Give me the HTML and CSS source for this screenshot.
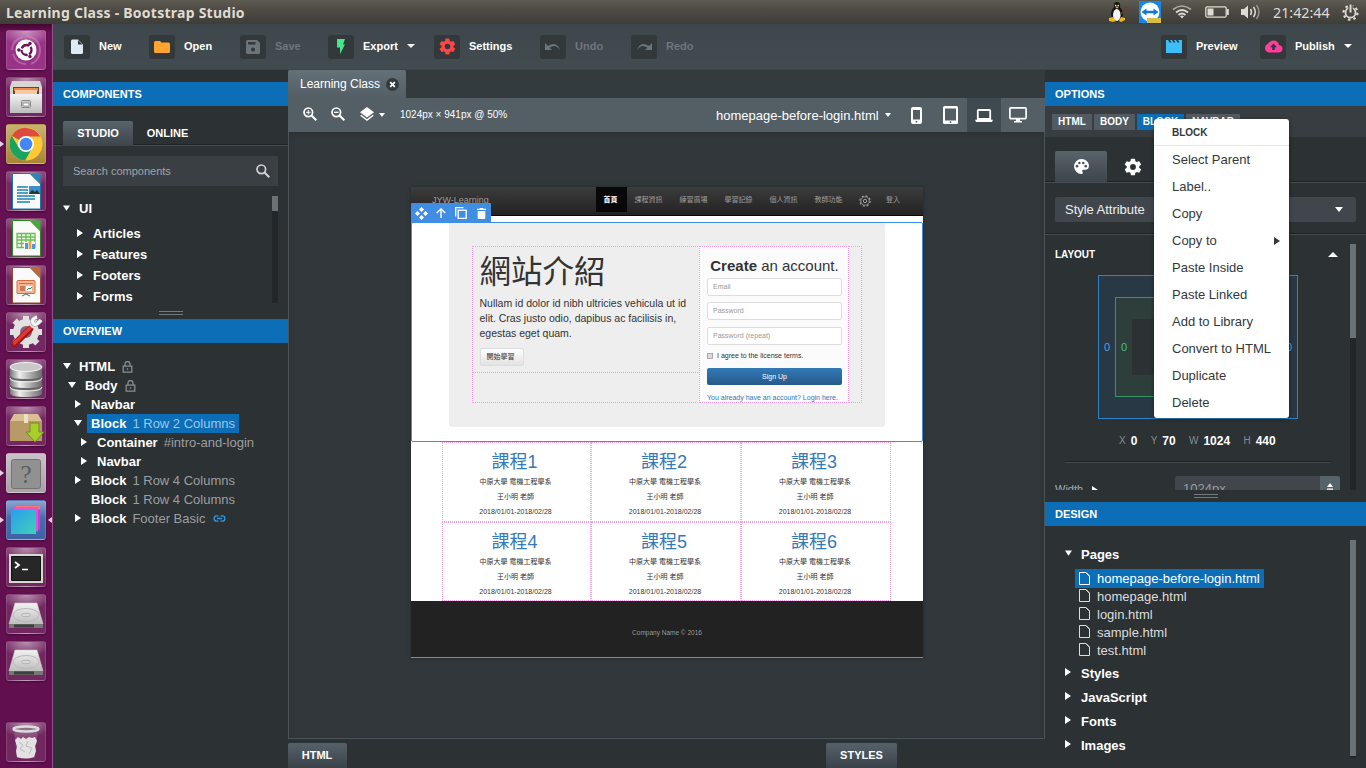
FILE: index.html
```html
<!DOCTYPE html>
<html lang="en">
<head>
<meta charset="utf-8">
<title>Learning Class - Bootstrap Studio</title>
<link rel="stylesheet" href="styles.css">
</head>
<body>
<svg class="sprite" width="0" height="0">
  <defs>
    <linearGradient id="metal" x1="0" y1="0" x2="0" y2="1"><stop offset="0" stop-color="#f2f2f2"/><stop offset="1" stop-color="#bdbdbd"/></linearGradient>
    <linearGradient id="cyl" x1="0" y1="0" x2="1" y2="0"><stop offset="0" stop-color="#777"/><stop offset=".3" stop-color="#eee"/><stop offset=".65" stop-color="#aaa"/><stop offset="1" stop-color="#6b6b6b"/></linearGradient>
    <linearGradient id="studio" x1="0" y1="0" x2="1" y2="1"><stop offset="0" stop-color="#299df0"/><stop offset="1" stop-color="#42d1b5"/></linearGradient>
  </defs>
  <symbol id="right" viewBox="0 0 6 8"><path d="M0 0l6 4-6 4z" fill="currentColor"/></symbol>
  <symbol id="down" viewBox="0 0 8 6"><path d="M0 0h8L4 6z" fill="currentColor"/></symbol>
  <symbol id="caret" viewBox="0 0 8 4"><path d="M0 0h8L4 4z" fill="currentColor"/></symbol>
  <symbol id="gear" viewBox="0 0 24 24"><path fill="currentColor" d="M19.4 13a7.800 7.800 0 0 0 0-2l2.100-1.600a.5.5 0 0 0 .1-.7l-2-3.400a.5.5 0 0 0-.6-.2l-2.500 1a7.300 7.300 0 0 0-1.700-1l-.4-2.600a.5.500 0 0 0-.5-.5h-4a.5.500 0 0 0-.5.500L9 5.100a7.300 7.300 0 0 0-1.700 1l-2.500-1a.5.500 0 0 0-.6.200l-2 3.400a.5.500 0 0 0 .1.700L4.500 11a7.800 7.800 0 0 0 0 2l-2.200 1.600a.5.500 0 0 0-.1.700l2 3.400c.1.200.4.300.6.200l2.500-1a7.300 7.300 0 0 0 1.700 1l.4 2.600c0 .3.200.5.500.5h4c.300 0 .5-.2.500-.5l.4-2.600a7.300 7.300 0 0 0 1.700-1l2.500 1c.2.100.5 0 .6-.2l2-3.400a.5.500 0 0 0-.1-.7zM12 15.500a3.500 3.500 0 1 1 0-7 3.500 3.500 0 0 1 0 7z"/></symbol>
  <symbol id="lock" viewBox="0 0 11 12"><path d="M3 5V3a2.500 2.500 0 0 1 5 0v2M1.200 5.200h8.600v6H1.200zM4.800 8h1.400" fill="none" stroke="#8b8f91" stroke-width="1.300"/></symbol>
  <symbol id="page" viewBox="0 0 11 13"><path d="M1 .5h6.200L10.500 4v8.500H.5V.5z" fill="none" stroke="currentColor"/><path d="M7 .7L10.200 4" stroke="currentColor" fill="none"/></symbol>
  <symbol id="mag" viewBox="0 0 14 14"><circle cx="5.300" cy="5.300" r="4.300" fill="none" stroke="currentColor" stroke-width="1.700"/><path d="M8.300 8.300l5 5" stroke="currentColor" stroke-width="2"/></symbol>
  <symbol id="drive" viewBox="0 0 40 40"><path d="M9 9h22l6 21H3z" fill="url(#metal)" stroke="#c9c9c9" stroke-width=".6"/><ellipse cx="20" cy="21" rx="13" ry="6.500" fill="none" stroke="#b9b9b9"/><ellipse cx="20" cy="21" rx="4.500" ry="1.800" fill="#d8d8d8" stroke="#aaa" stroke-width=".8"/><path d="M3 30h34v4H3z" fill="#777"/><path d="M8 30.500h20v3H8z" fill="#3f3f3f"/></symbol>
</svg>

<header class="osbar">
  <span class="os-title">Learning Class - Bootstrap Studio</span>
  <div class="tray">
    <svg class="t-tux" width="22" height="22" viewBox="0 0 22 22"><ellipse cx="10" cy="13" rx="6" ry="7.500" fill="#151515"/><ellipse cx="10" cy="5" rx="3.200" ry="4" fill="#151515"/><ellipse cx="9.800" cy="14" rx="3.800" ry="6" fill="#f4f4f4"/><path d="M8 5.500l4 .2-2 2z" fill="#f3b41c"/><circle cx="8.600" cy="4.500" r=".8" fill="#fff"/><circle cx="11.200" cy="4.500" r=".8" fill="#fff"/><path d="M2 17l4-1 3 4-3 1-4-1zM18 17l-4-1-2 4 2 1 4-2z" fill="#f3b41c"/><path d="M14 13l6-7" stroke="#6c3d19" stroke-width="1.500"/></svg>
    <svg class="t-tv" width="22" height="22" viewBox="0 0 22 22"><path fill="#1486e8" d="M0 0h22v22H0z"/><circle cx="11" cy="11" r="9.500" fill="#fff"/><path d="M2.500 11l5-3.500v2.300h7V7.500l5 3.500-5 3.500v-2.300h-7v2.300z" fill="#1479d5"/><path d="M8 17h14v5H8z" fill="#d8bd48"/></svg>
    <svg class="t-wifi" width="20" height="14" viewBox="0 0 20 14"><g fill="none" stroke="#dfdbd2" stroke-width="1.700"><path d="M1 4.500q9-7 18 0" opacity=".65"/><path d="M4 7.500q6-5 12 0"/><path d="M6.500 10q3.500-3 7 0"/></g><path d="M8 11.300q2-1.500 4 0L10 13.500z" fill="#dfdbd2"/></svg>
    <svg class="t-bat" width="24" height="12" viewBox="0 0 24 12"><rect x=".8" y=".8" width="20.400" height="10.400" rx="1.500" fill="none" stroke="#dfdbd2" stroke-width="1.300"/><path d="M2.500 2.500h6v7h-6zM22 3h1.800v6H22z" fill="#dfdbd2"/></svg>
    <svg class="t-vol" width="20" height="16" viewBox="0 0 20 16"><path d="M0 5h3l4-3.500v13L3 11H0z" fill="#dfdbd2"/><g fill="none" stroke="#dfdbd2" stroke-width="1.500"><path d="M9.500 5q2 3 0 6"/><path d="M12.500 3q3.500 5 0 10"/><path d="M15.500 1q5 7 0 14" opacity=".5"/></g></svg>
    <span class="clock">21:42:44</span>
    <svg class="t-pow" width="17" height="17" viewBox="0 0 17 17"><circle cx="8.500" cy="8.700" r="5" fill="none" stroke="#dfdbd2" stroke-width="1.800"/><circle cx="8.500" cy="8.700" r="7" fill="none" stroke="#dfdbd2" stroke-width="2.200" stroke-dasharray="2.500 3"/><path d="M8.500 0v8" stroke="#4b4a44" stroke-width="4.500"/><path d="M8.500 .5v8" stroke="#dfdbd2" stroke-width="2"/></svg>
  </div>
</header>

<div class="desktop">
<nav class="launcher">
  <div class="tile tile-dash"><svg viewBox="0 0 40 40"><g fill="none" stroke="#d997ca" opacity=".45" stroke-width="2"><path d="M20 6A14 14 0 0 1 34 20Q34 30 25 34M6 20Q6 10 17 7M20 34Q10 34 7 24"/></g><circle cx="20" cy="20" r="10.500" fill="#fff"/><circle cx="20.500" cy="20" r="5" fill="none" stroke="#6b1157" stroke-width="2.300" stroke-dasharray="9 1.470" stroke-dashoffset="4"/><g fill="#6b1157"><circle cx="12.800" cy="20" r="1.700"/><circle cx="24" cy="13.500" r="1.700"/><circle cx="24" cy="26.500" r="1.700"/></g></svg></div>
  <div class="tile"><svg viewBox="0 0 40 40"><path d="M6 4h28l2 6v26H4V10z" fill="#d6d6d4"/><path d="M7 10h26v7H7z" fill="#5f463a"/><path d="M8 11h24v3H8z" fill="#f08a4a"/><path d="M9 13h22v4H9z" fill="#f7c9a2"/><path d="M4 17h32v19H4z" fill="url(#metal)"/><rect x="15.500" y="23.500" width="9" height="7" rx="1" fill="#ccc" stroke="#888"/><path d="M17 26h6v3h-6z" fill="#fff" stroke="#777" stroke-width=".7"/></svg></div>
  <div class="tile tile-chrome run"><svg viewBox="0 0 40 40"><circle cx="20" cy="20" r="16.500" fill="#fcc934"/><path d="M20 20L5.700 11.800A16.500 16.500 0 0 1 34.300 12.500H20z" fill="#dd4b3e"/><path d="M5.700 11.800A16.500 16.500 0 0 0 19 36.500L26.500 23.500 13 24z" fill="#1aa260"/><circle cx="20" cy="20" r="8" fill="#fff"/><circle cx="20" cy="20" r="6.300" fill="#4486f4"/></svg></div>
  <div class="tile"><svg viewBox="0 0 40 40"><path d="M6.500 2.500H24L34.500 13v25h-28z" fill="#fafafa" stroke="#1d73a3"/><path d="M24 2.500h10.500V13z" fill="#2b86b6"/><path d="M11 16h11M11 19h11M11 22h11M11 25h18M11 28h18M11 31h13" stroke="#1f81b3" stroke-width="1.500"/><path d="M23 15h11v8H23z" fill="#3b8ed0"/><path d="M23 23l3-4 3 2 2-2 3 4z" fill="#1c3b35"/></svg></div>
  <div class="tile"><svg viewBox="0 0 40 40"><path d="M6.500 2.500H24L34.500 13v25h-28z" fill="#fafafa" stroke="#278a1e"/><path d="M24 2.500h10.500V13z" fill="#3fae35"/><path d="M11 15.500h18v14H11zM11 19h18M11 22h18M11 25.500h18M15.500 15v14M20 15v14M24.500 15v14" fill="none" stroke="#67c04c" stroke-width="1.300"/><path d="M18 24h11v7H18z" fill="#fff"/><path d="M19 25h3v6h-3z" fill="#4c99d6"/><path d="M22.500 23h3v8h-3z" fill="#e8a54b"/><path d="M26 26h3v5h-3z" fill="#4c99d6"/></svg></div>
  <div class="tile"><svg viewBox="0 0 40 40"><path d="M6.500 2.500H24L34.500 13v25h-28z" fill="#fafafa" stroke="#96492c"/><path d="M24 2.500h10.500V13z" fill="#b56b3f"/><rect x="11" y="15.500" width="18" height="13" rx="1" fill="#f4b592" stroke="#d96c3f"/><path d="M13 18.500h14" stroke="#d96c3f"/><path d="M14 21h5v5h-5z" fill="#c97b54"/><path d="M20 21h6v5h-6z" fill="#fff"/><path d="M21 25l2-2 1 1 2-2" stroke="#2a9a50" fill="none"/><path d="M16 31l4-2 4 2" stroke="#666" fill="none"/></svg></div>
  <div class="tile"><svg viewBox="0 0 40 40"><g fill="#e1e1e1"><circle cx="20" cy="20" r="13"/><path d="M17 4h6v32h-6zM4 17h32v6H4z"/><path d="M17 4h6v32h-6z" transform="rotate(45 20 20)"/><path d="M17 4h6v32h-6z" transform="rotate(-45 20 20)"/></g><circle cx="20" cy="20" r="6" fill="#8b5b80"/><path d="M8.500 32L24 17" stroke="#a31515" stroke-width="6.500" stroke-linecap="round"/><path d="M8.500 31L24 16" stroke="#dc3a34" stroke-width="3.500" stroke-linecap="round"/><path d="M25 15l4-4" stroke="#ddd" stroke-width="4"/><path d="M31 5q-6 2-4 6t8-3" fill="none" stroke="#999" stroke-width="4.500"/><path d="M31 5q-6 2-4 6t8-3" fill="none" stroke="#f4f4f4" stroke-width="3.400"/></svg></div>
  <div class="tile"><svg viewBox="0 0 40 40"><path d="M4 8v26q0 4 16 4t16-4V8z" fill="url(#cyl)"/><ellipse cx="20" cy="8" rx="16" ry="4.500" fill="#c8c8c8" stroke="#f4f4f4"/><path d="M4 17q0 4 16 4t16-4M4 26q0 4 16 4t16-4" fill="none" stroke="#666" stroke-width="2"/><path d="M4 19q0 4 16 4t16-4M4 28q0 4 16 4t16-4" fill="none" stroke="#eee"/></svg></div>
  <div class="tile"><svg viewBox="0 0 40 40"><path d="M8 8h24l4 7v20H4V15z" fill="#d9bf91"/><path d="M4 15h32v20H4z" fill="#b79a68"/><path d="M18 8h4v9h-4z" fill="#eee0c4"/><path d="M24 17h9v9h5l-9 10-9-10h4z" fill="#a8ce2b" stroke="#718f18"/></svg></div>
  <div class="tile tile-gray run"><svg viewBox="0 0 40 40"><rect x="5.500" y="6.500" width="29" height="29" rx="2" fill="#919191" stroke="#737373"/><text class="qmark" x="20" y="30" text-anchor="middle">?</text></svg></div>
  <div class="tile tile-bs run active"><svg viewBox="0 0 40 40"><path d="M10 5.500h24v24H10z" fill="#e82cc4"/><path d="M10 5.500h24v4H10z" fill="#f57676"/><path d="M8 7.500h24v24H8z" fill="#b862ef"/><path d="M8 7.500h24v3H8z" fill="#ec51cb"/><path d="M5 10h25v24H5z" fill="url(#studio)"/></svg></div>
  <div class="tile"><svg viewBox="0 0 40 40"><path d="M3 7h34v29H3z" fill="#d8d8d5"/><path d="M5.500 9.500h29v24h-29z" fill="#272727" stroke="#111"/><path d="M9 15l4 3-4 3M16 22.500h6" fill="none" stroke="#fff" stroke-width="1.700"/></svg></div>
  <div class="tile"><svg><use href="#drive"/></svg></div>
  <div class="tile"><svg><use href="#drive"/></svg></div>
  <div class="tile tile-trash"><svg viewBox="0 0 40 40"><path d="M8 7l3 29h18l3-29z" fill="#9a6b90" opacity=".5"/><path d="M9 18l3-3 3 2 2-2 3 2 3-2 3 1 3-1 2 4-2 5 1 5-2 6q-8 3-17 0l-1-6 1-4z" fill="#e2e2e2"/><path d="M13 20l4 3-3 4 5 3M22 19l-2 5 6 2-3 6" fill="none" stroke="#bbb"/><ellipse cx="20" cy="7" rx="12.500" ry="2.500" fill="#8e7288" stroke="#dcdcdc" stroke-width="2.500"/></svg></div>
</nav>

<div class="app">
<div class="toolbar">
  <div class="tools">
    <div class="tool"><i><svg width="14" height="16" viewBox="0 0 14 16"><path d="M1 2q0-1.500 1.500-1.500H8L13 5.500v8q0 1.500-1.500 1.500h-9Q1 15 1 13.500z" fill="#deebf4"/><path d="M8 1v4.500h4.500z" fill="#33383b"/></svg></i><span>New</span></div>
    <div class="tool"><i><svg width="16" height="12" viewBox="0 0 16 12"><path d="M1.500 0H6l1.500 1.500h7Q16 1.500 16 3v7.500q0 1.500-1.500 1.500h-13Q0 12 0 10.500v-9Q0 0 1.500 0z" fill="#ffa42e"/></svg></i><span>Open</span></div>
    <div class="tool off"><i><svg width="14" height="14" viewBox="0 0 14 14"><path d="M1.500 0H11l3 3v9.500q0 1.500-1.500 1.500h-11Q0 14 0 12.500v-11Q0 0 1.500 0z" fill="#6d747a"/><path d="M2 2h7.500v2.500H2z" fill="#33383b"/><circle cx="7" cy="9.500" r="2" fill="#33383b"/></svg></i><span>Save</span></div>
    <div class="tool"><i><svg width="8" height="15" viewBox="0 0 8 15"><path d="M0 0h8L6 5.500h2L3 15V8.500H0z" fill="#49e58b"/></svg></i><span>Export</span><svg class="tcaret"><use href="#caret"/></svg></div>
    <div class="tool"><i class="red"><svg width="19" height="19"><use href="#gear"/></svg></i><span>Settings</span></div>
    <div class="tool off"><i><svg width="16" height="8" viewBox="0 0 16 8"><path d="M0 0v7h7L4.500 4.700Q11 0 15 7.500 12-2.500 3 3z" fill="#6d747a"/></svg></i><span>Undo</span></div>
    <div class="tool off"><i><svg width="16" height="8" viewBox="0 0 16 8"><path d="M16 0v7H9l2.500-2.300Q5 0 1 7.500 4-2.500 13 3z" fill="#6d747a"/></svg></i><span>Redo</span></div>
  </div>
  <div class="tools2">
    <div class="tool"><i><svg width="16" height="13" viewBox="0 0 16 13"><path d="M0 0h2l1.500 2.500h2L4 0h2l1.500 2.500h2L8 0h2l1.500 2.500h2L12 0h4v13H0z" fill="#3bbefa"/></svg></i><span>Preview</span></div>
    <div class="tool"><i><svg width="19" height="13" viewBox="0 0 19 13"><path d="M5 12.500A4.500 4.500 0 0 1 3.500 4Q6 .5 9.500.5q4.500 0 5.500 4.500 3.500.5 3.500 3.800T15 12.500z" fill="#ff3d9d"/><path d="M9.500 3.500L13 7.200h-2.200V10H8.200V7.200H6z" fill="#33383b"/></svg></i><span>Publish</span><svg class="tcaret"><use href="#caret"/></svg></div>
  </div>
</div>

<div class="workspace">
<aside class="left">
  <h2 class="bar">COMPONENTS</h2>
  <div class="tabs"><span class="tab on">STUDIO</span><span class="tab">ONLINE</span></div>
  <div class="search"><span>Search components</span><svg width="14" height="14"><use href="#mag"/></svg></div>
  <div class="complist">
    <div class="comps">
      <div class="row r-ui"><svg class="dn"><use href="#down"/></svg><b>UI</b></div>
      <div class="row sub"><svg class="rt"><use href="#right"/></svg><b>Articles</b></div>
      <div class="row sub"><svg class="rt"><use href="#right"/></svg><b>Features</b></div>
      <div class="row sub"><svg class="rt"><use href="#right"/></svg><b>Footers</b></div>
      <div class="row sub"><svg class="rt"><use href="#right"/></svg><b>Forms</b></div>
    </div>
    <div class="scroll"><div class="thumb th-comp"></div></div>
  </div>
  <div class="split"></div>
  <h2 class="bar">OVERVIEW</h2>
  <div class="tree">
    <div class="row l0"><svg class="dn"><use href="#down"/></svg><b>HTML</b><svg class="lk"><use href="#lock"/></svg></div>
    <div class="row l1"><svg class="dn"><use href="#down"/></svg><b>Body</b><svg class="lk"><use href="#lock"/></svg></div>
    <div class="row l2"><svg class="rt"><use href="#right"/></svg><b>Navbar</b></div>
    <div class="row l2"><svg class="dn"><use href="#down"/></svg><span class="sel"><b>Block</b><em>1 Row 2 Columns</em></span></div>
    <div class="row l3"><svg class="rt"><use href="#right"/></svg><b>Container</b><em>#intro-and-login</em></div>
    <div class="row l3"><svg class="rt"><use href="#right"/></svg><b>Navbar</b></div>
    <div class="row l2"><svg class="rt"><use href="#right"/></svg><b>Block</b><em>1 Row 4 Columns</em></div>
    <div class="row l2"><svg class="rt"></svg><b>Block</b><em>1 Row 4 Columns</em></div>
    <div class="row l2"><svg class="rt"><use href="#right"/></svg><b>Block</b><em>Footer Basic</em><svg class="lnk" viewBox="0 0 13 7"><path d="M5.500.8H3.800a2.700 2.700 0 0 0 0 5.400h1.700M7.500.8h1.700a2.700 2.700 0 0 1 0 5.400H7.500M4 3.500h5" fill="none" stroke="#2d9be0" stroke-width="1.300"/></svg></div>
  </div>
</aside>

<main class="center">
  <div class="doctabs"><div class="doctab">Learning Class<svg width="13" height="13" viewBox="0 0 13 13"><circle cx="6.500" cy="6.500" r="6.500" fill="#343b3e"/><path d="M4.200 4.200l4.600 4.600M8.800 4.200L4.200 8.800" stroke="#fff" stroke-width="1.900"/></svg></div></div>
  <div class="viewbar">
    <svg class="v-in" width="14" height="14" viewBox="0 0 14 14"><use href="#mag" width="14" height="14"/><path d="M3 5.300h4.600M5.300 3v4.600" stroke="#fff"/></svg>
    <svg class="v-out" width="14" height="14" viewBox="0 0 14 14"><use href="#mag" width="14" height="14"/><path d="M3 5.300h4.600" stroke="#fff" stroke-width="1.300"/></svg>
    <svg class="v-lay" width="14" height="14" viewBox="0 0 14 14"><path d="M7 0l7 5.200-7 5.300-7-5.300z" fill="#fff"/><path d="M.7 8.200L7 13l6.300-4.800" fill="none" stroke="#fff" stroke-width="1.400"/></svg>
    <svg class="v-caret" width="6" height="4" viewBox="0 0 6 4"><path d="M0 0h6L3 4z" fill="#fff"/></svg>
    <span class="dims">1024px × 941px @ 50%</span>
    <span class="fname">homepage-before-login.html<svg width="6" height="4" viewBox="0 0 6 4"><path d="M0 0h6L3 4z" fill="#fff"/></svg></span>
    <div class="devs">
      <span><svg width="11" height="17" viewBox="0 0 11 17"><rect width="11" height="17" rx="2" fill="#fff"/><path d="M2 3h7v9.500H2z" fill="#535e65"/><circle cx="5.500" cy="14.700" r=".9" fill="#535e65"/></svg></span>
      <span><svg width="15" height="18" viewBox="0 0 15 18"><rect width="15" height="18" rx="1.500" fill="#fff"/><path d="M2 2.500h11v12H2z" fill="#535e65"/><circle cx="7.500" cy="16.200" r=".9" fill="#535e65"/></svg></span>
      <span class="on"><svg width="18" height="13" viewBox="0 0 18 13"><path d="M2.800 10V1.800q0-.8.800-.8h10.800q.8 0 .8.800V10z" fill="none" stroke="#fff" stroke-width="1.800"/><path d="M0 10.800h18l-1 2.200H1z" fill="#fff"/></svg></span>
      <span><svg width="18" height="16" viewBox="0 0 18 16"><rect x=".9" y=".9" width="16.200" height="10.700" rx="1" fill="none" stroke="#fff" stroke-width="1.700"/><path d="M7 12h4v2h2v1.500H5V14h2z" fill="#fff"/></svg></span>
    </div>
  </div>
  <div class="canvas">
    <div class="board">
      <div class="nav">
        <span class="brand">JYW-Learning</span>
        <div class="links"><span class="cur">首頁</span><span>課程資訊</span><span>練習廣場</span><span>學習記錄</span><span>個人資訊</span><span>教師功能</span><svg width="12" height="12" viewBox="0 0 12 12"><g fill="none" stroke="#9d9d9d"><circle cx="6" cy="6" r="1.700"/><circle cx="6" cy="6" r="4.200" stroke-width=".8"/><circle cx="6" cy="6" r="5.100" stroke-width="1.300" stroke-dasharray="2 2"/></g></svg><span>登入</span></div>
      </div>
      <section class="picked">
        <div class="handle">
          <svg width="13" height="13" viewBox="0 0 13 13"><path d="M6.500 0L9 2.500 6.500 5 4 2.500zM6.500 8L9 10.500 6.500 13 4 10.500zM2.500 4L5 6.500 2.500 9 0 6.500zM10.500 4L13 6.500 10.500 9 8 6.500z" fill="#fff"/></svg>
          <svg width="10" height="10" viewBox="0 0 10 10"><path d="M5 10V1M.7 5L5 .9 9.300 5" fill="none" stroke="#fff" stroke-width="1.400"/></svg>
          <svg width="12" height="12" viewBox="0 0 12 12"><path d="M.7 9.500V.7H8.500" fill="none" stroke="#fff" stroke-width="1.300"/><rect x="3.200" y="3.200" width="8" height="8.200" fill="none" stroke="#fff" stroke-width="1.300"/></svg>
          <svg width="9" height="11" viewBox="0 0 9 11"><path d="M0 .7h2.500L3 0h3l.5.700H9V2H0zM.7 3h7.600v7q0 1-1 1H1.700q-1 0-1-1z" fill="#fff"/></svg>
        </div>
        <div class="jumbo">
          <div class="cols">
            <div class="intro">
              <h1>網站介紹</h1>
              <p>Nullam id dolor id nibh ultricies vehicula ut id<br>elit. Cras justo odio, dapibus ac facilisis in,<br>egestas eget quam.</p>
              <span class="start">開始學習</span>
            </div>
            <div class="signup">
              <h3><b>Create</b> an account.</h3>
              <span class="inp">Email</span><span class="inp">Password</span><span class="inp">Password (repeat)</span>
              <div class="agree"><i></i>I agree to the license terms.</div>
              <span class="go">Sign Up</span>
              <span class="already">You already have an account? Login here.</span>
            </div>
          </div>
        </div>
      </section>
      <div class="courses">
        <div><h4>課程1</h4><p>中原大學 電機工程學系</p><p>王小明 老師</p><p>2018/01/01-2018/02/28</p></div>
        <div><h4>課程2</h4><p>中原大學 電機工程學系</p><p>王小明 老師</p><p>2018/01/01-2018/02/28</p></div>
        <div><h4>課程3</h4><p>中原大學 電機工程學系</p><p>王小明 老師</p><p>2018/01/01-2018/02/28</p></div>
        <div><h4>課程4</h4><p>中原大學 電機工程學系</p><p>王小明 老師</p><p>2018/01/01-2018/02/28</p></div>
        <div><h4>課程5</h4><p>中原大學 電機工程學系</p><p>王小明 老師</p><p>2018/01/01-2018/02/28</p></div>
        <div><h4>課程6</h4><p>中原大學 電機工程學系</p><p>王小明 老師</p><p>2018/01/01-2018/02/28</p></div>
      </div>
      <div class="foot">Company Name © 2016</div>
    </div>
  </div>
  <div class="dock"><span class="d-html">HTML</span><span class="d-styles">STYLES</span></div>
</main>

<aside class="right">
  <h2 class="bar">OPTIONS</h2>
  <div class="crumbs"><span>HTML</span><span>BODY</span><span class="on">BLOCK</span><span>NAVBAR</span></div>
  <div class="otabs"><span class="on"><svg width="17" height="17" viewBox="0 0 24 24"><path fill="#fff" d="M12 1.500a10.500 10.500 0 1 0 0 21c1 0 1.800-.8 1.800-1.800 0-1.300-.8-1.500-.8-2.500s.8-1.700 1.800-1.700h2.200a5.500 5.500 0 0 0 5.500-5.500c0-5.300-4.700-9.500-10.500-9.500z"/><g fill="#4a5158"><circle cx="5.700" cy="11.500" r="1.800"/><circle cx="9" cy="7" r="1.800"/><circle cx="14.500" cy="7" r="1.800"/><circle cx="18" cy="11.500" r="1.800"/></g></svg></span><span><svg width="20" height="20"><use href="#gear"/></svg></span></div>
  <div class="selwrap"><div class="select">Style Attribute<svg width="8" height="5" viewBox="0 0 8 5"><path d="M0 0h8L4 5z" fill="#fff"/></svg></div></div>
  <div class="props">
    <div class="plist">
      <div class="phead">LAYOUT<svg width="10" height="5" viewBox="0 0 10 5"><path d="M0 5h10L5 0z" fill="#fff"/></svg></div>
      <div class="box"><span>0</span><div class="pad"><span>0</span><div class="core"></div><span>0</span></div><span>0</span></div>
      <div class="xy"><span>X</span><b>0</b><span>Y</span><b>70</b><span>W</span><b>1024</b><span>H</span><b>440</b></div>
      <div class="prow"><span class="wl">Width</span><svg class="rt"><use href="#right"/></svg><div class="num">1024px</div><div class="step"><svg width="6" height="7" viewBox="0 0 6 7"><path d="M0 4h6L3 0zM0 5.500h6v1.200H0z" fill="#fff"/></svg></div></div>
    </div>
    <div class="scroll"><div class="thumb th-opt"></div></div>
  </div>
  <div class="split rs"></div>
  <h2 class="bar">DESIGN</h2>
  <div class="design">
    <div class="dlist">
      <div class="row big"><svg class="dn"><use href="#down"/></svg><b>Pages</b></div>
      <div class="files">
        <div class="file on"><svg><use href="#page"/></svg>homepage-before-login.html</div>
        <div class="file"><svg><use href="#page"/></svg>homepage.html</div>
        <div class="file"><svg><use href="#page"/></svg>login.html</div>
        <div class="file"><svg><use href="#page"/></svg>sample.html</div>
        <div class="file"><svg><use href="#page"/></svg>test.html</div>
      </div>
      <div class="row big"><svg class="rt"><use href="#right"/></svg><b>Styles</b></div>
      <div class="row big"><svg class="rt"><use href="#right"/></svg><b>JavaScript</b></div>
      <div class="row big"><svg class="rt"><use href="#right"/></svg><b>Fonts</b></div>
      <div class="row big"><svg class="rt"><use href="#right"/></svg><b>Images</b></div>
    </div>
    <div class="scroll"><div class="thumb th-des"></div></div>
  </div>
</aside>
</div>
</div>
</div>

<div class="menu">
  <div class="mh">BLOCK</div>
  <div class="mi">Select Parent</div><div class="mi">Label..</div><div class="mi">Copy</div>
  <div class="mi">Copy to<svg class="rt"><use href="#right"/></svg></div>
  <div class="mi">Paste Inside</div><div class="mi">Paste Linked</div><div class="mi">Add to Library</div><div class="mi">Convert to HTML</div><div class="mi">Duplicate</div><div class="mi">Delete</div>
</div>
</body>
</html>
```
FILE: styles.css
```css
* { box-sizing: border-box; }
body { margin: 0; width: 1366px; height: 768px; overflow: hidden; display: flex; flex-direction: column; background: #2c3134; color: #fff; font-family: "Liberation Sans", "Noto Sans CJK TC", sans-serif; font-size: 13px; }
h1, h2, h3, h4, p { margin: 0; font-weight: normal; }
em, i { font-style: normal; }
svg { display: block; flex: none; }
.sprite { position: absolute; }

.osbar { height: 24px; flex: none; display: flex; justify-content: space-between; align-items: center; background: linear-gradient(#5f5d52, #504e46 30%, #3e3d38); font-family: "Noto Sans", sans-serif; color: #dfdbd2; }
.os-title { padding-left: 6px; font-weight: bold; font-size: 14px; letter-spacing: .25px; white-space: nowrap; }
.tray { display: flex; align-items: center; height: 24px; padding-right: 7px; }
.t-tux { margin-right: 10px; }
.t-tv { margin-right: 11px; }
.t-wifi { margin-right: 13px; }
.t-bat { margin-right: 12px; }
.t-vol { margin-right: 12px; }
.clock { width: 56px; margin-right: 13px; font-size: 14.300px; white-space: nowrap; }

.desktop { flex: 1; display: flex; min-height: 0; }
.launcher { width: 53px; flex: none; padding: 6px 0 0 6px; background: linear-gradient(#42082f, #651152 8px, #620f50); border-right: 1px solid #93508a; display: flex; flex-direction: column; gap: 7px; }
.tile { position: relative; width: 40px; height: 40px; border-radius: 3px; border: 1px solid rgba(255,255,255,.14); background: radial-gradient(ellipse 26px 15px at 50% 0, rgba(255,255,255,.55), rgba(255,255,255,.1)); box-shadow: 0 1px 2px rgba(0,0,0,.35); }
.tile svg { width: 40px; height: 40px; margin: -1px; }
.tile-dash { background-color: #8c1c77; }
.tile-chrome { background: linear-gradient(#c8b170, #a78634); }
.tile-gray { background: linear-gradient(#c9c2c7, #aaa0a8); }
.tile-bs { background: linear-gradient(#8ba5cf, #456cae 45%, #3d63a5); }
.tile-trash { margin-top: 34px; }
.qmark { font: 25px "Liberation Serif", serif; fill: #5b5b5b; }
.run::before, .active::after { content: ""; position: absolute; top: 16px; left: -7px; border: solid transparent; border-width: 3px 0 3px 4px; border-left-color: #e3d5e0; }
.active::after { left: 41px; border-width: 3px 4px 3px 0; border-right-color: #e3d5e0; }

.app { flex: 1; min-width: 0; display: flex; flex-direction: column; }
.toolbar { height: 46px; flex: none; display: flex; justify-content: space-between; align-items: center; padding-left: 11px; background: linear-gradient(#3e474c, #424b50); font-size: 11px; font-weight: bold; border-bottom: 1px solid #3b4447; }
.tools { display: grid; grid-template-columns: 85px 91px 88px 106px 106px 91px 91px; }
.tools2 { display: grid; grid-template-columns: 99px 106px; }
.tool { display: flex; align-items: center; white-space: nowrap; }
.tool span { padding-bottom: 2px; }
.tool i { width: 26px; height: 24px; margin-right: 9px; border-radius: 3px; background: #33383b; display: flex; align-items: center; justify-content: center; }
.tool i.red { color: #ff4545; }
.off { color: #6d767c; }
.tcaret { width: 8px; height: 4px; margin: 0 0 2px 9px; }

.workspace { flex: 1; display: flex; min-height: 0; }
.left { width: 235px; flex: none; padding-top: 12px; }
.bar { height: 24px; background: #0b6eb7; padding-left: 10px; font-size: 11px; font-weight: bold; line-height: 25px; }
.tabs { height: 40px; padding: 15px 0 0 10px; display: flex; font-size: 11px; font-weight: bold; border-bottom: 1px solid #464d51; box-shadow: inset 0 -1px #1f2325; }
.tab { width: 69px; height: 25px; line-height: 25px; text-align: center; }
.tab.on { width: 70px; background: linear-gradient(#58636a, #3e444b); border-radius: 2px 2px 0 0; }
.search { margin: 10px 10px 0; height: 30px; padding: 0 8px 0 10px; display: flex; align-items: center; justify-content: space-between; background: #393f42; color: #a0a5a8; font-size: 11px; }
.search svg { color: #d3d5d6; }
.complist { margin: 10px 10px 0; height: 107px; display: flex; justify-content: space-between; overflow: hidden; }
.scroll { width: 6px; background: #222628; flex: none; }
.thumb { background: #697276; }
.th-comp { height: 15px; }
.th-opt { height: 94px; }
.th-des { height: 216px; }
.row { display: flex; align-items: center; height: 19px; white-space: nowrap; }
.dn { width: 7px; height: 6px; }
.rt { width: 6px; height: 8px; }
.row .dn { margin: 0 9px 2px 0; }
.row .rt { margin: 0 10px 2px 0; }
.r-ui { margin: 3px 0 5px; }
.sub { height: 21px; padding-left: 14px; }
.split { width: 24px; height: 4px; border: solid #73797c; border-width: 1px 0; margin: 8px 0 4px 106px; }
.tree { padding: 14px 0 0 10px; }
.l1 { padding-left: 5px; }
.l2 { padding-left: 12px; }
.l3 { padding-left: 18px; }
.tree .row .dn { width: 8px; margin-right: 9px; }
.tree .l0 .dn { margin-right: 8px; }
.tree .l2 .dn { margin: 0 5px 2px -1px; }
.row em { color: #9b9fa1; margin-left: 6px; }
.sel { background: #0b6eb7; height: 19px; line-height: 19px; padding: 0 4px; }
.sel em { color: #9cc8e8; }
.lk { width: 11px; height: 12px; margin-left: 7px; }
.lnk { width: 13px; height: 7px; margin-left: 8px; }

.center { width: 757px; flex: none; display: flex; flex-direction: column; }
.doctabs { height: 28px; background: #343b3e; }
.doctab { width: 118px; height: 28px; padding: 0 7px 0 12px; display: flex; align-items: center; justify-content: space-between; background: linear-gradient(#647077, #535e65); border-radius: 2px 2px 0 0; font-size: 12px; white-space: nowrap; }
.viewbar { height: 34px; background: #535e65; display: flex; align-items: center; padding-left: 15px; flex: none; }
.viewbar > svg { margin-bottom: 2px; }
.viewbar > .v-out { margin: 0 15px 2px 14px; }
.viewbar > .v-caret { margin: 0 0 0 5px; }
.dims { font-size: 10px; width: 300px; margin-left: 15px; padding-bottom: 1px; white-space: nowrap; }
.fname { margin-left: 16px; width: 175px; display: flex; align-items: center; justify-content: space-between; white-space: nowrap; }
.devs { margin-left: 8px; display: grid; grid-template-columns: repeat(4, 34px); }
.devs span { height: 34px; display: flex; align-items: center; justify-content: center; }
.devs .on { background: #3f4a50; }
.canvas { height: 607px; flex: none; border: solid #4a5358; border-width: 0 1px 1px; background: #32373b; padding: 55px 0 0 122px; box-shadow: inset 0 2px 5px rgba(0,0,0,.12); }
.dock { flex: 1; display: flex; padding-top: 4px; font-size: 11px; font-weight: bold; text-align: center; line-height: 25px; }
.dock span { background: linear-gradient(#55616a, #3b4249); border-radius: 2px 2px 0 0; }
.d-html { width: 59px; padding-right: 1px; }
.d-styles { width: 71px; margin-left: 479px; }

.board { width: 512px; height: 471px; background: #fff; color: #333; box-shadow: 0 0 4px rgba(0,0,0,.3); border-bottom: 1px solid #8b8b8b; }
.nav { height: 29px; background: linear-gradient(#3c3c3c, #222); border-bottom: 1px solid #080808; color: #9d9d9d; display: flex; }
.brand { width: 185px; padding: 8px 0 0 21px; font-size: 9px; line-height: 10px; white-space: nowrap; }
.links { display: flex; font-size: 7px; line-height: 25px; height: 25px; white-space: nowrap; }
.links span { width: 45px; text-align: center; }
.links span.cur { width: 31px; background: #080808; color: #fff; margin-right: -1px; padding-right: 2px; font-weight: bold; }
.links svg { margin: 8px 8px 0 8px; }
.links span:last-child { width: 28px; }
.picked { margin-top: 6px; height: 220px; border: 1px solid #408de4; border-radius: 2px; position: relative; padding-left: 37px; }
.handle { position: absolute; left: -1px; top: -20px; width: 80px; height: 20px; background: #408de4; border-radius: 1px 1px 0 0; display: grid; grid-template-columns: repeat(4, 20px); place-items: center; padding-right: 1px; }
.jumbo { width: 435.500px; height: 204px; background: #eee; border-radius: 0 0 3px 3px; padding: 23px 0 0 23px; }
.cols { width: 390px; height: 157px; border: 1px dotted #f79bea; display: flex; }
.intro { margin: -1px 0 0 -1px; width: 228px; height: 127px; border: 1px dotted #f79bea; padding: 6px 0 0 6.500px; }
.intro h1 { font-size: 31.500px; line-height: 39px; height: 43px; white-space: nowrap; }
.intro p { font-size: 10.500px; line-height: 15px; white-space: nowrap; }
.start { display: block; width: 44px; height: 18px; margin-top: 7px; border: 1px solid #ddd; border-radius: 2px; background: linear-gradient(#fff, #e2e2e2); font-size: 7px; line-height: 16px; text-align: center; padding-right: 2px; }
.signup { margin: -1px 0 0 -1px; width: 150px; height: 157px; border: 1px dotted #f79bea; background: #fbfbfb; padding: 9px 6px 0 7px; overflow: hidden; }
.signup h3 { font-size: 15px; line-height: 19px; height: 21.500px; text-align: center; white-space: nowrap; }
.signup h3 b { font-weight: bold; }
.inp { display: block; height: 18px; margin-bottom: 6.500px; border: 1px solid #ddd; border-radius: 2px; background: #fff; color: #999; font-size: 7px; line-height: 16px; padding-left: 5px; }
.agree { font-size: 7px; line-height: 8px; display: flex; align-items: center; height: 10px; margin: 0 0 7px; white-space: nowrap; color: #333; }
.agree i { width: 6px; height: 6px; background: #ddd; border: 1px solid #aaa; margin-right: 4px; }
.go { display: block; height: 17px; border-radius: 2px; background: linear-gradient(#337ab7, #265a88); color: #fff; font-size: 7px; line-height: 18px; text-align: center; }
.already { display: block; margin-top: 9px; font-size: 7px; line-height: 8px; color: #337ab7; white-space: nowrap; }
.courses { margin: 0 32px 0 31px; height: 159px; display: grid; grid-template-columns: 149px 150px 150px; grid-template-rows: 80px 79px; text-align: center; }
.courses div { border: 1px dotted #f3a0e6; padding: 7px 2px 0 0; }
.courses h4 { font-size: 18px; line-height: 24px; color: #337ab7; margin-left: -2px; }
.courses p { font-size: 7px; line-height: 15px; white-space: nowrap; color: #333; }
.foot { height: 56px; background: #222; color: #999; font-size: 6.500px; line-height: 63px; text-align: center; }

.right { flex: 1; padding-top: 12px; min-width: 0; }
.crumbs { height: 31px; background: #373d40; padding: 8px 0 0 7px; display: grid; grid-template-columns: 40px 41px 47px 54px; gap: 2px; font-size: 10px; font-weight: bold; text-align: center; line-height: 15px; }
.crumbs span { height: 16px; background: #515b61; }
.crumbs .on { background: #0b6eb7; }
.otabs { height: 46px; padding: 14px 0 0 10px; display: flex; border-bottom: 1px solid #464d51; box-shadow: inset 0 -1px #1f2325; }
.otabs span { width: 52px; height: 31px; display: flex; align-items: center; justify-content: center; }
.otabs .on { background: linear-gradient(#58636a, #3e444b); border-radius: 2px 2px 0 0; }
.selwrap { height: 52px; padding: 14px 10px 0; border-bottom: 1px solid #464d51; box-shadow: inset 0 -1px #1f2325; }
.select { height: 25px; background: #40464c; border-radius: 2px; padding: 0 13px 0 10px; display: flex; align-items: center; justify-content: space-between; color: #eee; font-size: 13px; letter-spacing: -.03px; }
.props { margin: 9px 10px 0; height: 246px; display: flex; overflow: hidden; }
.plist { width: 295px; }
.phead { height: 31px; display: flex; justify-content: space-between; padding: 0 12px 0 0; font-size: 10px; font-weight: bold; line-height: 21px; }
.phead svg { margin-top: 8px; }
.box { margin-left: 43px; width: 200px; height: 144px; border: 1px solid #2d84c7; background: #293845; display: flex; align-items: center; color: #4aa3df; font-size: 11px; text-align: center; }
.box span { width: 16px; }
.pad { width: 166px; height: 100px; border: 1px solid #349566; background: #2d3e3b; color: #48c17d; display: flex; align-items: center; }
.core { width: 132px; height: 56px; background: #2c3134; }
.xy { height: 43px; margin: 0 20px 0 10px; padding: 15px 0 0 54px; display: flex; font-size: 12px; line-height: 14px; border-bottom: 1px solid #1f2325; box-shadow: 0 1px #42484b; white-space: nowrap; }
.xy span { color: #878c8f; font-size: 10px; margin-right: 5px; }
.xy b { margin-right: 13.300px; }
.prow { display: flex; margin-top: 14px; height: 25px; color: #aaaeb0; font-size: 11px; line-height: 26px; }
.wl { width: 37px; }
.prow .rt { margin-top: 10px; color: #fff; }
.num { width: 145px; margin-left: 77px; background: #40464c; padding-left: 8px; font-size: 13px; color: #999da0; border-radius: 2px 0 0; }
.step { width: 20px; background: #57636a; padding: 7px; border-radius: 0 2px 0 0; }
.split.rs { margin: 4px 0 4px 149px; }
.design { display: flex; justify-content: space-between; padding: 14px 10px 0 20px; }
.dlist { padding-top: 2px; }
.big { height: 24px; }
.files { margin: 3px 0 2px 10px; }
.file { height: 18px; line-height: 19px; width: 189px; padding-left: 4px; display: flex; align-items: center; color: #ddd; white-space: nowrap; }
.file svg { width: 11px; height: 13px; margin: 0 7px 1px 0; }
.file.on { background: #0b6eb7; color: #fff; height: 19px; margin-bottom: -1px; }
.design .scroll { height: 218px; }

.menu { position: absolute; left: 1154px; top: 119px; width: 135px; height: 299px; background: #fff; border-radius: 3px; color: #33383b; box-shadow: 0 1px 4px rgba(0,0,0,.4); }
.mh { height: 27px; padding-left: 18px; line-height: 27px; font-size: 10px; font-weight: bold; border-bottom: 1px solid #e8e8e8; }
.mi { height: 27px; padding: 0 9px 0 18px; line-height: 28px; display: flex; justify-content: space-between; align-items: center; white-space: nowrap; }
```
